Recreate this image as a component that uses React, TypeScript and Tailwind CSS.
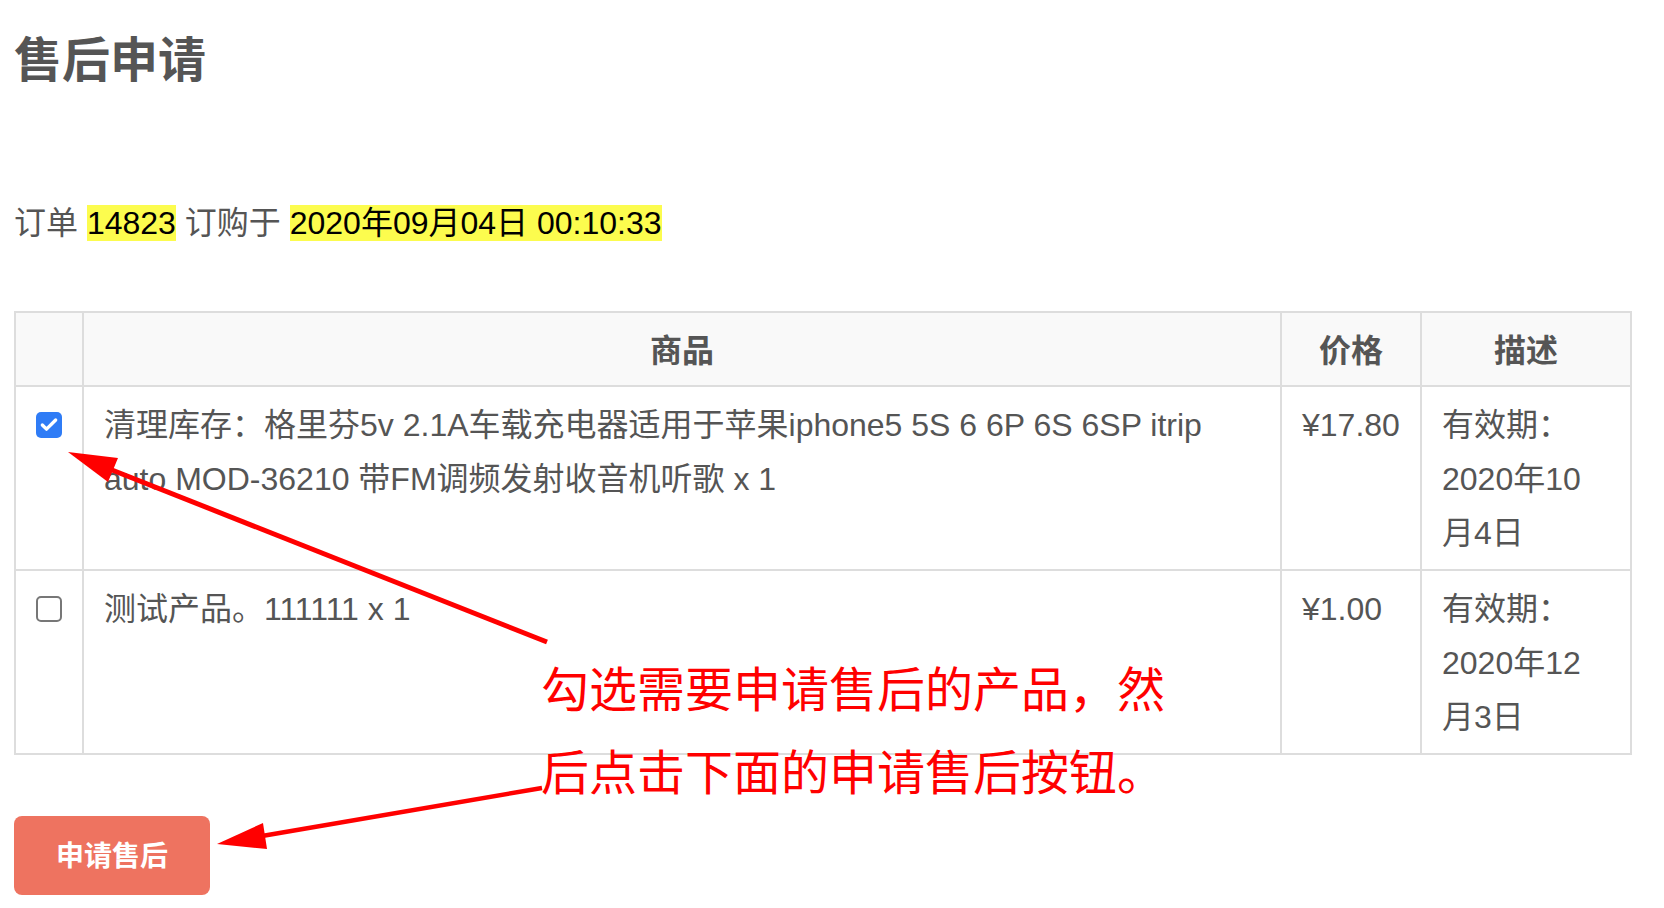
import { Check } from "lucide-react";

const line = "border-r-2 border-b-2 border-[#dddddd]";
const head = `${line} bg-[#f9f9f9] pt-[11px] pb-[7px] text-center font-bold`;
const cell = `${line} px-[20px] pt-[11px] pb-[9px]`;

function Box({ checked }: { checked?: boolean }) {
	return (
		<div className="flex h-[54px] items-center justify-center">
			{checked ? (
				<div className="flex h-[26px] w-[26px] items-center justify-center rounded-[5px] bg-[#2f7cf6]">
					<Check className="h-[20px] w-[20px] text-white" strokeWidth={4} />
				</div>
			) : (
				<div className="h-[26px] w-[26px] rounded-[5px] border-2 border-[#777777] bg-white" />
			)}
		</div>
	);
}

export default function App() {
	return (
		<div className="relative min-h-[908px] w-[1664px] bg-white pt-[37px] pl-[14px] font-['Liberation_Sans','Noto_Sans_CJK_SC',sans-serif] text-[#555555]">
			<h1 className="text-[48px] leading-[48px] font-bold">售后申请</h1>

			<p className="mt-[120px] text-[32px] leading-[36px]">
				订单 <span className="bg-[#fcfc4e] text-black">14823</span> 订购于{" "}
				<span className="bg-[#fcfc4e] text-black">2020年09月04日 00:10:33</span>
			</p>

			<div className="mt-[70px] grid w-[1618px] grid-cols-[68px_1198px_140px_210px] border-t-2 border-l-2 border-[#dddddd] text-[32px] leading-[54px]">
				<div className={head}>&nbsp;</div>
				<div className={head}>商品</div>
				<div className={head}>价格</div>
				<div className={head}>描述</div>

				<div className={`${line} pt-[11px] pb-[9px]`}>
					<Box checked />
				</div>
				<div className={cell}>
					清理库存：格里芬5v 2.1A车载充电器适用于苹果iphone5 5S 6 6P 6S 6SP itrip
					<br />
					auto MOD-36210 带FM调频发射收音机听歌 x 1
				</div>
				<div className={cell}>¥17.80</div>
				<div className={cell}>
					有效期：
					<br />
					2020年10
					<br />
					月4日
				</div>

				<div className={`${line} pt-[11px] pb-[9px]`}>
					<Box />
				</div>
				<div className={cell}>测试产品。111111 x 1</div>
				<div className={cell}>¥1.00</div>
				<div className={cell}>
					有效期：
					<br />
					2020年12
					<br />
					月3日
				</div>
			</div>

			<button
				type="button"
				className="mt-[61px] h-[79px] w-[196px] rounded-[8px] bg-[#ee7360] pt-[3px] text-[28px] font-bold text-white"
			>
				申请售后
			</button>

			{/* annotation overlay */}
			<svg className="pointer-events-none absolute top-0 left-0" width="1664" height="908">
				<line x1="547" y1="642" x2="112" y2="470" stroke="#ff0000" strokeWidth="5" />
				<polygon points="68,452 118,458 108,482" fill="#ff0000" />
				<line x1="542" y1="788" x2="262" y2="836" stroke="#ff0000" strokeWidth="4.5" />
				<polygon points="217,844 263,823 267,849" fill="#ff0000" />
			</svg>
			<div className="pointer-events-none absolute top-[645px] left-[541px] font-['Noto_Sans_CJK_SC',sans-serif] text-[48px] leading-[83px] whitespace-nowrap text-[#ff0000]">
				勾选需要申请售后的产品，然
				<br />
				后点击下面的申请售后按钮。
			</div>
		</div>
	);
}
